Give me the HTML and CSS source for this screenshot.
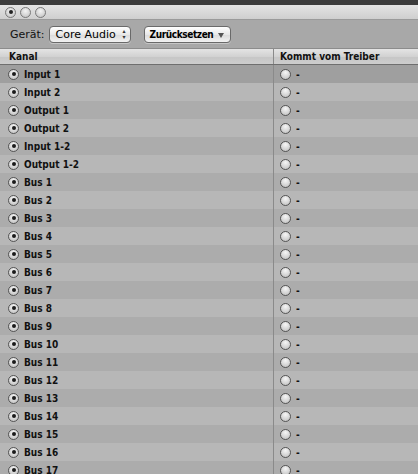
FILE: index.html
```html
<!DOCTYPE html>
<html>
<head>
<meta charset="utf-8">
<link rel="stylesheet" href="styles.css">
</head>
<body>
<div class="window">
  <div class="desk"></div>
  <div class="titlebar">
    <span class="light close"></span>
    <span class="light"></span>
    <span class="light"></span>
  </div>
  <div class="toolbar">
    <span class="label">Gerät:</span>
    <span class="popup popup-device">Core Audio<span class="updown">▴<br>▾</span></span>
    <span class="popup popup-reset">Zurücksetzen<span class="down"></span></span>
  </div>
  <div class="header">
    <div class="hcell c1">Kanal</div>
    <div class="hcell c2">Kommt vom Treiber</div>
  </div>
  <div class="rows" id="rows"></div>
</div>
<script>
var names = ["Input 1","Input 2","Output 1","Output 2","Input 1-2","Output 1-2"];
for (var i = 1; i <= 17; i++) names.push("Bus " + i);
var html = "";
names.forEach(function(n, i){
  html += '<div class="row ' + (i === 0 ? 'sel' : (i % 2 ? 'odd' : 'even')) + '">' +
    '<div class="cell c1"><span class="radio on"></span><span class="name">' + n + '</span></div>' +
    '<div class="cell c2"><span class="radio"></span><span class="dash">-</span></div></div>';
});
document.getElementById("rows").innerHTML = html;
</script>
</body>
</html>
```
FILE: styles.css
```css
html, body {
  margin: 0;
  padding: 0;
  width: 418px;
  height: 474px;
  overflow: hidden;
  background: #b0b0b0;
}
.window {
  font-family: "DejaVu Sans Condensed", "DejaVu Sans", sans-serif;
  font-size: 10px;
  font-weight: bold;
  color: #111;
}
.desk {
  height: 5px;
  background: #3c3c3c;
}
.titlebar {
  height: 14px;
  background: linear-gradient(#e4e4e4, #cfcfcf);
  display: flex;
  align-items: center;
  gap: 4px;
  padding-left: 5px;
  border-bottom: 1px solid #9a9a9a;
}
.light {
  width: 9px;
  height: 9px;
  border-radius: 50%;
  border: 1px solid #7a7a7a;
  background: radial-gradient(circle at 50% 35%, #f4f4f4, #bdbdbd);
  position: relative;
}
.close::after {
  content: "";
  position: absolute;
  left: 2.5px;
  top: 2.5px;
  width: 4px;
  height: 4px;
  border-radius: 50%;
  background: #222;
}
.toolbar {
  height: 28px;
  background: #a8a8a8;
  display: flex;
  align-items: center;
  padding-left: 10px;
  border-bottom: 1px solid #8c8c8c;
}
.label {
  font-family: "DejaVu Sans", sans-serif;
  font-weight: normal;
  font-size: 11px;
  color: #111;
  margin-right: 4px;
}
.popup {
  height: 15px;
  border: 1px solid #6a6a6a;
  border-radius: 4px;
  background: linear-gradient(#ffffff, #e8e8e8 50%, #dadada 51%, #f2f2f2);
  display: flex;
  align-items: center;
  color: #000;
  position: relative;
  box-shadow: 0 1px 0 rgba(255,255,255,0.35);
}
.popup-device {
  width: 74px;
  padding-left: 6px;
  font-family: "DejaVu Sans", sans-serif;
  font-weight: normal;
  font-size: 11px;
}
.popup-reset {
  margin-left: 13px;
  width: 80px;
  padding-left: 5px;
  font-weight: bold;
  font-size: 10px;
  letter-spacing: -0.4px;
}
.updown {
  position: absolute;
  right: 4px;
  top: 1px;
  font-size: 6px;
  line-height: 6px;
  color: #333;
}
.down {
  position: absolute;
  right: 6px;
  top: 6px;
  width: 0;
  height: 0;
  border-left: 3px solid transparent;
  border-right: 3px solid transparent;
  border-top: 5px solid #555;
}
.header {
  height: 15px;
  display: flex;
  background: linear-gradient(#e4e4e4, #d2d2d2 50%, #c6c6c6 51%, #cdcdcd);
  border-bottom: 1px solid #6f6f6f;
}
.hcell {
  display: flex;
  align-items: center;
}
.c1 {
  width: 274px;
  padding-left: 9px;
  box-sizing: border-box;
  border-right: 1px solid #8a8a8a;
}
.c2 {
  flex: 1;
  padding-left: 6px;
}
.row {
  height: 18px;
  display: flex;
}
.row.odd { background: #b7b7b7; }
.row.even { background: #acacac; }
.row.sel { background: #9f9f9f; }
.cell {
  display: flex;
  align-items: center;
}
.cell.c1 {
  padding-left: 8px;
}
.cell.c2 {
  padding-left: 6px;
}
.radio {
  width: 9px;
  height: 9px;
  border-radius: 50%;
  border: 1px solid #555;
  background: radial-gradient(circle at 50% 30%, #f6f6f6, #bcbcbc);
  position: relative;
  margin-right: 5px;
  flex: none;
}
.radio.on::after {
  content: "";
  position: absolute;
  left: 2.5px;
  top: 2.5px;
  width: 4px;
  height: 4px;
  border-radius: 50%;
  background: #1a1a1a;
}
.name { color: #111; }
.dash { color: #111; }
```
